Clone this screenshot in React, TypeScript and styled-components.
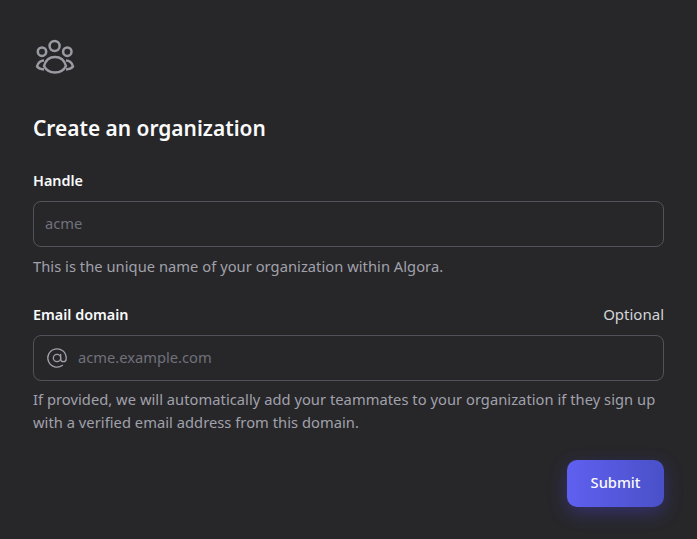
import React from "react";
import styled, { createGlobalStyle } from "styled-components";
import { AtSign } from "lucide-react";

const GlobalStyle = createGlobalStyle`
  html, body {
    margin: 0;
    padding: 0;
    background: #27272a;
  }
  * {
    box-sizing: border-box;
  }
`;

const Page = styled.main`
  width: 697px;
  height: 539px;
  overflow: hidden;
  background: #27272a;
  padding: 32px 33px 0;
  font-family: "Noto Sans", sans-serif;
`;

const Logo = styled.svg`
  display: block;
  margin-left: 1px;
  width: 42px;
  height: 42px;
  color: #9a9aa2;
`;

const Title = styled.h1`
  margin: 40px 0 0;
  color: #fafafa;
  font-size: 20.9px;
  line-height: 28px;
  font-weight: 600;
`;

const Field = styled.div<{ $top: number }>`
  margin-top: ${(props) => props.$top}px;
`;

const LabelRow = styled.div`
  display: flex;
  justify-content: space-between;
  align-items: center;
  height: 20px;
`;

const Label = styled.label`
  color: #fafafa;
  font-size: 14.4px;
  font-weight: 600;
`;

const Optional = styled.span`
  color: #d4d4d8;
  font-size: 15px;
`;

const InputBox = styled.div`
  display: flex;
  align-items: center;
  height: 46px;
  margin-top: 11px;
  padding: 0 11px;
  border: 1px solid #52525b;
  border-radius: 8px;
`;

const Input = styled.input`
  flex: 1;
  min-width: 0;
  padding: 0 0 2px;
  border: 0;
  outline: 0;
  background: transparent;
  color: #fafafa;
  font: inherit;
  font-size: 14.7px;
  &::placeholder {
    color: #71717a;
    opacity: 1;
  }
`;

const InputIcon = styled(AtSign)`
  flex: none;
  width: 22px;
  height: 22px;
  margin: 0 10px 0 1px;
  color: #a1a1aa;
`;

const Hint = styled.p<{ $top: number }>`
  margin: ${(props) => props.$top}px 0 0;
  color: #a1a1aa;
  font-size: 14.7px;
  line-height: 23px;
  letter-spacing: 0.04px;
`;

const Actions = styled.div`
  display: flex;
  justify-content: flex-end;
  margin-top: 26px;
`;

const SubmitButton = styled.button`
  width: 97px;
  height: 47px;
  padding: 0 0 3px;
  border: 0;
  border-radius: 10px;
  background: linear-gradient(90deg, #5f60f0, #4a50c8);
  box-shadow: 0 6px 18px rgba(79, 70, 229, 0.35);
  color: #fafafa;
  font: inherit;
  font-size: 14.7px;
  font-weight: 500;
`;

const GroupIcon = () => (
  <Logo viewBox="0 0 42 42" fill="none" stroke="currentColor" strokeWidth="2.5">
    <circle cx="20.600" cy="14" r="5" />
    <circle cx="8" cy="19.700" r="4.200" />
    <circle cx="33.300" cy="19.700" r="4.200" />
    <path d="M21 25c5.500 0 9.500 3.500 11 9 -2 4 -6.500 6.500 -11 6.500s-9 -2.500 -11 -6.500c1.500 -5.500 5.500 -9 11 -9z" />
    <path d="M10 28.500c-3.500 0 -6 2.500 -7 6 1.500 1.800 4 2.800 7 3" />
    <path d="M32 28.500c3.500 0 6 2.500 7 6 -1.500 1.800 -4 2.800 -7 3" />
  </Logo>
);

export default function App() {
  return (
    <Page>
      <GlobalStyle />
      <GroupIcon />
      <Title>Create an organization</Title>
      <Field $top={28}>
        <LabelRow>
          <Label>Handle</Label>
        </LabelRow>
        <InputBox>
          <Input placeholder="acme" />
        </InputBox>
        <Hint $top={8}>This is the unique name of your organization within Algora.</Hint>
      </Field>
      <Field $top={26}>
        <LabelRow>
          <Label>Email domain</Label>
          <Optional>Optional</Optional>
        </LabelRow>
        <InputBox>
          <InputIcon strokeWidth={1.4} />
          <Input placeholder="acme.example.com" />
        </InputBox>
        <Hint $top={7}>
          If provided, we will automatically add your teammates to your organization if they sign up with a verified
          email address from this domain.
        </Hint>
      </Field>
      <Actions>
        <SubmitButton type="button">Submit</SubmitButton>
      </Actions>
    </Page>
  );
}
